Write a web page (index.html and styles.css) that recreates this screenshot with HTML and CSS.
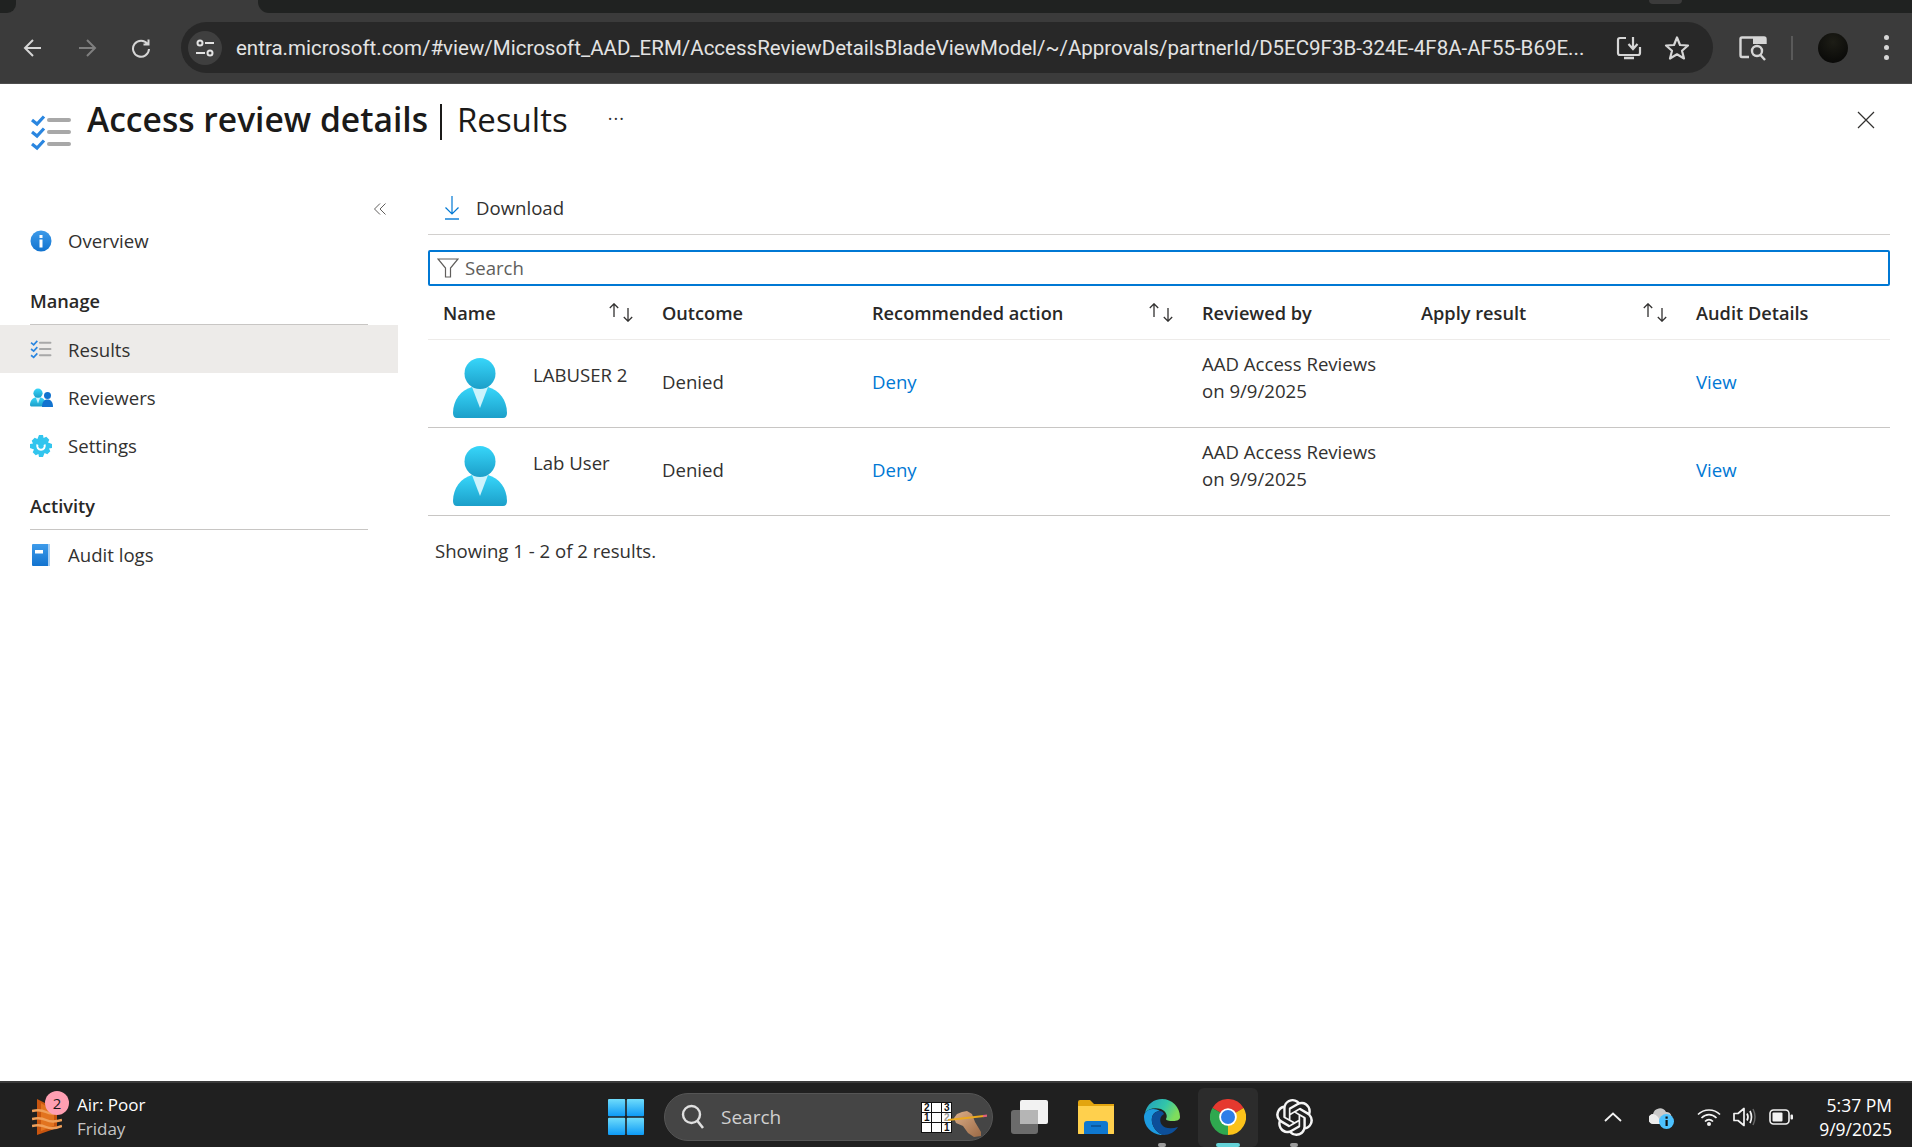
FILE: index.html
```html
<!DOCTYPE html>
<html lang="en">
<head>
  <meta charset="UTF-8" />
  <title>Access review details</title>
  <link rel="stylesheet" href="styles.css">
</head>
<body>
  <svg class="defs" width="0" height="0">
    <defs>
      <linearGradient id="cyan" x1="0" y1="0" x2="0" y2="1">
        <stop offset="0" stop-color="#37d6fa"/>
        <stop offset="1" stop-color="#1c9fc9"/>
      </linearGradient>
      <linearGradient id="blue" x1="0" y1="0" x2="0" y2="1">
        <stop offset="0" stop-color="#3d9bea"/>
        <stop offset="1" stop-color="#1273cf"/>
      </linearGradient>
      <linearGradient id="winblue" x1="0" y1="0" x2="0" y2="1">
        <stop offset="0" stop-color="#6fdcfb"/>
        <stop offset="1" stop-color="#0d9af5"/>
      </linearGradient>
      <linearGradient id="edgetop" x1="0" y1="0" x2="1" y2=".4">
        <stop offset="0" stop-color="#1f9cc4"/>
        <stop offset=".6" stop-color="#33c6a8"/>
        <stop offset="1" stop-color="#7fdc5c"/>
      </linearGradient>
      <linearGradient id="handskin" x1="0" y1="0" x2="1" y2="1">
        <stop offset="0" stop-color="#dcae88"/>
        <stop offset="1" stop-color="#9c6a46"/>
      </linearGradient>
      <symbol id="checklist" viewBox="0 0 42 36">
        <g fill="none" stroke="#2a86e0" stroke-width="3.2">
          <polyline points="2,5 7,9 14,1.5"/>
          <polyline points="2,17 7,21 14,13.5"/>
          <polyline points="2,29 7,33 14,25.5"/>
        </g>
        <g fill="none" stroke="#a8a8a8" stroke-width="4" stroke-linecap="round">
          <line x1="19" y1="5" x2="39" y2="5"/>
          <line x1="19" y1="17" x2="39" y2="17"/>
          <line x1="19" y1="29" x2="39" y2="29"/>
        </g>
      </symbol>
      <symbol id="person" viewBox="0 0 54 60">
        <path fill="url(#cyan)" d="M4 60Q0 60 0 55C0 42 8 32 19 29H35C46 32 54 42 54 55Q54 60 50 60Z"/>
        <path fill="#cdf3fc" d="M19 29H35L27 50Z"/>
        <circle fill="url(#cyan)" cx="27" cy="15.5" r="15.5"/>
      </symbol>
      <symbol id="sort" viewBox="0 0 24 19">
        <g fill="none" stroke="#323130" stroke-width="1.3">
          <path d="M5 14V.8M.8 5 5 .8 9.2 5"/>
          <path d="M19 5V18.2M14.800 14 19 18.200 23.200 14"/>
        </g>
      </symbol>
    </defs>
  </svg>

  <header class="browser">
    <div class="tabstrip">
      <div class="tab-gap-left"></div>
      <div class="tab-active"></div>
      <div class="tab-rest"><span class="tab-stub"></span></div>
    </div>
    <div class="toolbar">
      <svg width="20" height="20" viewBox="0 0 20 20"><path d="M18 10H2.500M10 2 2 10 10 18" fill="none" stroke="#d6d6d6" stroke-width="2"/></svg>
      <svg class="fwd" width="20" height="20" viewBox="0 0 20 20"><path d="M2 10H17.500M10 2 18 10 10 18" fill="none" stroke="#7f7f7f" stroke-width="2"/></svg>
      <svg class="reload" width="20" height="20" viewBox="0 0 20 20"><path d="M16.500 6A8 8 0 1 0 18 11M17.500 1.500V6.500H12.500" fill="none" stroke="#d6d6d6" stroke-width="2"/></svg>
      <div class="omnibox">
        <span class="site-btn">
          <svg width="20" height="20" viewBox="0 0 20 20"><g fill="none" stroke="#e3e3e3" stroke-width="2"><circle cx="5" cy="5" r="2.500"/><path d="M10 5H19M1 15H10"/><circle cx="15" cy="15" r="2.500"/></g></svg>
        </span>
        <span class="url">entra.microsoft.com/#view/Microsoft_AAD_ERM/AccessReviewDetailsBladeViewModel/~/Approvals/partnerId/D5EC9F3B-324E-4F8A-AF55-B69E...</span>
        <svg width="26" height="26" viewBox="0 0 26 26"><path d="M10 3H4Q2 3 2 5V18Q2 20 4 20H22Q24 20 24 18V12" fill="none" stroke="#d6d6d6" stroke-width="2.200"/><path d="M8 23H18" stroke="#d6d6d6" stroke-width="2.500"/><path d="M17 2V13M12.500 9 17 14 21.500 9" fill="none" stroke="#d6d6d6" stroke-width="2.200"/></svg>
        <svg class="star" width="26" height="26" viewBox="0 0 26 26"><path d="M13 2.500 16 10 24 10.500 18 15.800 20 23.500 13 19.300 6 23.500 8 15.800 2 10.500 10 10Z" fill="none" stroke="#d6d6d6" stroke-width="2.200" stroke-linejoin="round"/></svg>
      </div>
      <svg class="reader" width="28" height="26" viewBox="0 0 28 26"><path d="M10 22H3Q1.500 22 1.500 20V4Q1.500 2.500 3 2.500H25Q26.500 2.500 26.500 4V9" fill="none" stroke="#d6d6d6" stroke-width="2.400"/><path d="M14 2H27V9H14Z" fill="#d6d6d6"/><circle cx="18" cy="16" r="5" fill="none" stroke="#d6d6d6" stroke-width="2.400"/><path d="M21.500 20 26 25" stroke="#d6d6d6" stroke-width="2.400"/></svg>
      <span class="tool-sep"></span>
      <span class="avatar"></span>
      <span class="dots"><i></i><i></i><i></i></span>
    </div>
  </header>

  <main class="blade">
    <div class="blade-head">
      <svg width="42" height="36"><use href="#checklist"/></svg>
      <h1 class="blade-title"><b>Access review details</b><span class="title-bar"></span><span class="title-sub">Results</span></h1>
      <span class="blade-more">...</span>
      <svg class="blade-close" width="18" height="18" viewBox="0 0 18 18"><path d="M1 1 17 17M17 1 1 17" stroke="#323130" stroke-width="1.200"/></svg>
    </div>

    <div class="blade-body">
      <nav class="sidebar">
        <div class="collapse">
          <svg width="12" height="12" viewBox="0 0 12 12"><path d="M6 .5.500 6 6 11.500M11.500.5 6 6 11.500 11.500" fill="none" stroke="#605e5c" stroke-width="1"/></svg>
        </div>
        <a class="nav-item">
          <svg width="22" height="22" viewBox="0 0 22 22"><circle cx="11" cy="11" r="10.500" fill="url(#blue)"/><rect x="9.500" y="9.500" width="3" height="8" fill="#fff"/><rect x="9.500" y="5" width="3" height="3" fill="#fff"/></svg>
          <span>Overview</span>
        </a>
        <div class="nav-head">Manage</div>
        <a class="nav-item active">
          <svg width="22" height="19"><use href="#checklist"/></svg>
          <span>Results</span>
        </a>
        <a class="nav-item">
          <svg width="23" height="19" viewBox="0 0 23 19"><use href="#person" x="0" y="0" width="16" height="19"/><circle cx="17.500" cy="7.500" r="3.500" fill="#1273cf"/><path d="M12 19C12 14 14 11.500 17.500 11.500S23 14 23 19Z" fill="#1273cf"/></svg>
          <span>Reviewers</span>
        </a>
        <a class="nav-item">
          <svg width="22" height="22" viewBox="0 0 22 22"><path fill="#32c5ee" d="M9 0H13L13.600 3 16.300 1.700 19.300 4.700 18 7.400 22 9V13L19 13.600 20.300 16.300 17.300 19.300 14.600 18 13 22H9L8.400 19 5.700 20.300 2.700 17.300 4 14.600 0 13V9L3 8.400 1.700 5.700 4.700 2.700 7.400 4Z"/><circle cx="11" cy="11" r="6" fill="#32c5ee"/><path d="M7.500 9.500A3.800 3.800 0 1 0 14.500 9.500" fill="none" stroke="#fff" stroke-width="2"/></svg>
          <span>Settings</span>
        </a>
        <div class="nav-head">Activity</div>
        <a class="nav-item">
          <svg width="22" height="22" viewBox="-2 0 22 22"><rect x="0" y="0" width="18" height="22" rx="1" fill="url(#blue)"/><rect x="16" y="0" width="2" height="22" fill="#a9cff2"/><rect x="3" y="6" width="8" height="3.500" fill="#fff"/></svg>
          <span>Audit logs</span>
        </a>
      </nav>

      <section class="content">
        <div class="commandbar">
          <svg width="16" height="24" viewBox="0 0 16 24"><path d="M8 0V18M1.500 11.500 8 18 14.500 11.500" fill="none" stroke="#0078d4" stroke-width="1.200"/><path d="M1 23H15" stroke="#0078d4" stroke-width="1.400"/></svg>
          <span>Download</span>
        </div>

        <div class="searchbox">
          <svg width="22" height="20" viewBox="0 0 22 20"><path d="M1 1H21L13.500 10V19H8.500V10Z" fill="none" stroke="#605e5c" stroke-width="1.200"/></svg>
          <span>Search</span>
        </div>

        <table class="results">
          <colgroup>
            <col class="c-name"><col class="c-outcome"><col class="c-action"><col class="c-reviewed"><col class="c-apply"><col class="c-audit">
          </colgroup>
          <thead>
            <tr>
              <th class="th-name"><div class="th-sort">Name<svg width="24" height="19"><use href="#sort"/></svg></div></th>
              <th>Outcome</th>
              <th><div class="th-sort">Recommended action<svg width="24" height="19"><use href="#sort"/></svg></div></th>
              <th>Reviewed by</th>
              <th><div class="th-sort">Apply result<svg width="24" height="19"><use href="#sort"/></svg></div></th>
              <th>Audit Details</th>
            </tr>
          </thead>
          <tbody>
            <tr>
              <td class="td-name"><div class="user"><svg width="54" height="60"><use href="#person"/></svg><span>LABUSER 2</span></div></td>
              <td>Denied</td>
              <td><a class="link">Deny</a></td>
              <td class="td-reviewed">AAD Access Reviews<br>on 9/9/2025</td>
              <td></td>
              <td><a class="link">View</a></td>
            </tr>
            <tr>
              <td class="td-name"><div class="user"><svg width="54" height="60"><use href="#person"/></svg><span>Lab User</span></div></td>
              <td>Denied</td>
              <td><a class="link">Deny</a></td>
              <td class="td-reviewed">AAD Access Reviews<br>on 9/9/2025</td>
              <td></td>
              <td><a class="link">View</a></td>
            </tr>
          </tbody>
        </table>

        <p class="count">Showing 1 - 2 of 2 results.</p>
      </section>
    </div>
  </main>

  <footer class="taskbar">
    <div class="weather">
      <div class="weather-icon">
        <svg width="30" height="36" viewBox="0 0 30 36"><path d="M5 0 25 10V29L5 36Z" fill="#c8550f"/><path d="M9 4 22 12V27L9 32Z" fill="#e2731f"/><g fill="none" stroke="#f0a05a" stroke-width="2.500"><path d="M0 12Q8 10 14 13T26 13"/><path d="M0 20Q8 18 14 21T30 21"/><path d="M0 27Q8 25 14 28T30 27"/></g></svg>
        <span class="badge">2</span>
      </div>
      <div class="weather-text">
        <span class="w-main">Air: Poor</span>
        <span class="w-sub">Friday</span>
      </div>
    </div>

    <div class="apps">
      <svg width="36" height="36" viewBox="0 0 36 36"><rect width="17.200" height="17.200" rx="1" fill="url(#winblue)"/><rect x="18.800" width="17.200" height="17.200" rx="1" fill="url(#winblue)"/><rect y="18.800" width="17.200" height="17.200" rx="1" fill="url(#winblue)"/><rect x="18.800" y="18.800" width="17.200" height="17.200" rx="1" fill="url(#winblue)"/></svg>
      <div class="tb-search">
        <svg width="24" height="26" viewBox="0 0 24 26"><circle cx="10.500" cy="10.500" r="8.500" fill="none" stroke="#e0e0e0" stroke-width="2.400"/><path d="M16.500 17 22 24" stroke="#e0e0e0" stroke-width="2.600"/></svg>
        <span class="tb-search-label">Search</span>
        <div class="sudoku">
          <span>2</span><span></span><span>3</span>
          <span>1</span><span></span><span class="faint">2</span>
          <span></span><span></span><span>1</span>
          <svg class="hand" width="39" height="26" viewBox="0 0 39 26"><path d="M6 7 9 3 14 1 19 0 24 3 27 11 33 21 33 25 26 26 20 22 15 15 8 12Z" fill="url(#handskin)"/><path d="M0 9 36 5" stroke="#eaa81e" stroke-width="2.200"/><path d="M35 5.100 39 4.600" stroke="#e0607a" stroke-width="2.200"/></svg>
        </div>
      </div>
      <svg class="app-taskview" width="37" height="34" viewBox="0 0 37 34"><rect x="0" y="10" width="27" height="24" rx="3" fill="#6b6b6b"/><rect x="9" y="0" width="28" height="24" rx="2" fill="#f2f2f2"/><rect x="9" y="10" width="18" height="14" fill="#b5b5b5"/></svg>
      <svg class="app-folder" width="36" height="34" viewBox="0 0 36 34"><path d="M0 2Q0 0 2 0H12L16 4H36V34H0Z" fill="#e3a50f"/><path d="M0 6H36V33Q36 34 35 34H1Q0 34 0 33Z" fill="#ffd04d"/><path d="M6 34V24Q6 21 9 21H27Q30 21 30 24V34Z" fill="#0f78d0"/><path d="M13 26H23" stroke="#0b4f8f" stroke-width="1.500"/></svg>
      <div class="app-tile">
        <svg width="36" height="36" viewBox="0 0 36 36"><path d="M1 14C3 5 10 0 18 0 28 0 36 8 36 18 36 21 33 22 29 22 25 22 22 21.500 22 20 24 17 22 12 17 10 10 8 4 10 1 14Z" fill="url(#edgetop)"/><path d="M1 14C4 9 12 9 16 12 10 12 7 17 8 23 9 29 14 35 20 36 9 37 0 28 0 18 0 16 .5 15 1 14Z" fill="#1d9be0"/><path d="M16 12C10 12 7 17 8 23 9 29 14 35 20 36 25 36 31 33 34 28 28 30 21 30 18 26 15 22 16 17 20 15 19 13 18 12 16 12Z" fill="#0c4f9a"/></svg>
        <i class="dot"></i>
      </div>
      <div class="app-tile active">
        <svg width="36" height="36" viewBox="0 0 36 36"><path d="M18 18 2.400 9A18 18 0 0 1 33.600 9Z" fill="#e5392f"/><path d="M18 18 33.600 9A18 18 0 0 1 18 36Z" fill="#fbc21a"/><path d="M18 18 18 36A18 18 0 0 1 2.400 9Z" fill="#2fa84f"/><circle cx="18" cy="18" r="8.800" fill="#fff"/><circle cx="18" cy="18" r="7" fill="#2f7ee8"/></svg>
        <i class="dot wide"></i>
      </div>
      <div class="app-tile">
        <svg width="37" height="37" viewBox="0 0 24 24"><path fill="#f4f4f4" d="M22.2819 9.8211a5.9847 5.9847 0 0 0-.5157-4.9108 6.0462 6.0462 0 0 0-6.5098-2.9A6.0651 6.0651 0 0 0 4.9807 4.1818a5.9847 5.9847 0 0 0-3.9977 2.9 6.0462 6.0462 0 0 0 .7427 7.0966 5.98 5.98 0 0 0 .511 4.9107 6.051 6.051 0 0 0 6.5146 2.9001A5.9847 5.9847 0 0 0 13.2599 24a6.0557 6.0557 0 0 0 5.7718-4.2058 5.9894 5.9894 0 0 0 3.9977-2.9001 6.0557 6.0557 0 0 0-.7475-7.0729zm-9.022 12.6081a4.4755 4.4755 0 0 1-2.8764-1.0408l.1419-.0804 4.7783-2.7582a.7948.7948 0 0 0 .3927-.6813v-6.7369l2.02 1.1686a.071.071 0 0 1 .038.052v5.5826a4.504 4.504 0 0 1-4.4945 4.4944zm-9.6607-4.1254a4.4708 4.4708 0 0 1-.5346-3.0137l.142.0852 4.783 2.7582a.7712.7712 0 0 0 .7806 0l5.8428-3.3685v2.3324a.0804.0804 0 0 1-.0332.0615L9.74 19.9502a4.4992 4.4992 0 0 1-6.1408-1.6464zM2.3408 7.8956a4.485 4.485 0 0 1 2.3655-1.9728V11.6a.7664.7664 0 0 0 .3879.6765l5.8144 3.3543-2.0201 1.1685a.0757.0757 0 0 1-.071 0l-4.8303-2.7865A4.504 4.504 0 0 1 2.3408 7.872zm16.5963 3.8558L13.1038 8.364 15.1192 7.2a.0757.0757 0 0 1 .071 0l4.8303 2.7913a4.4944 4.4944 0 0 1-.6765 8.1042v-5.6772a.79.79 0 0 0-.407-.667zm2.0107-3.0231l-.142-.0852-4.7735-2.7818a.7759.7759 0 0 0-.7854 0L9.409 9.2297V6.8974a.0662.0662 0 0 1 .0284-.0615l4.8303-2.7866a4.4992 4.4992 0 0 1 6.6802 4.66zM8.3065 12.863l-2.02-1.1638a.0804.0804 0 0 1-.038-.0567V6.0742a4.4992 4.4992 0 0 1 7.3757-3.4537l-.142.0805L8.704 5.459a.7948.7948 0 0 0-.3927.6813zm1.0976-2.3654l2.602-1.4998 2.6069 1.4998v2.9994l-2.5974 1.4997-2.6067-1.4997Z"/></svg>
        <i class="dot"></i>
      </div>
    </div>

    <div class="tray">
      <svg width="18" height="10" viewBox="0 0 18 10"><path d="M1 9 9 1.500 17 9" fill="none" stroke="#f2f2f2" stroke-width="1.800"/></svg>
      <svg width="25" height="24" viewBox="0 0 25 24"><path d="M5 19A5 5 0 0 1 4 9 7 7 0 0 1 17 7 5 5 0 0 1 18 17Z" fill="#c9c9c9"/><path d="M5 19A5 5 0 0 1 4 9Q10 10 12 19Z" fill="#ececec"/><circle cx="17.500" cy="16.500" r="7.500" fill="#4cc2ff"/><rect x="16.500" y="15" width="2.200" height="6" fill="#111"/><rect x="16.500" y="11.500" width="2.200" height="2.200" fill="#111"/></svg>
      <svg width="24" height="18" viewBox="0 0 24 18"><g fill="none" stroke="#f2f2f2" stroke-width="1.700"><path d="M1 6.500C7 .5 17 .5 23 6.500"/><path d="M4.500 10C9 5.500 15 5.500 19.500 10"/><path d="M8 13.500C10.500 11 13.500 11 16 13.500"/></g><circle cx="12" cy="16" r="2" fill="#f2f2f2"/></svg>
      <svg width="24" height="22" viewBox="0 0 24 22"><path d="M1 7.500H5L11 2.500V19.500L5 14.500H1Z" fill="none" stroke="#f2f2f2" stroke-width="1.700" stroke-linejoin="round"/><path d="M14 7.500Q16 11 14 14.500M17 5Q20 11 17 17" fill="none" stroke="#f2f2f2" stroke-width="1.700"/><path d="M20 3Q24 11 20 19" fill="none" stroke="#666" stroke-width="1.500"/></svg>
      <svg width="24" height="16" viewBox="0 0 24 16"><rect x="1" y="1" width="19" height="14" rx="3.500" fill="none" stroke="#f2f2f2" stroke-width="1.600"/><rect x="3.500" y="3.500" width="10" height="9" rx="1" fill="#f2f2f2"/><rect x="21.500" y="5.500" width="2.500" height="5" rx="1" fill="#f2f2f2"/></svg>
      <div class="clock"><span>5:37 PM</span><span>9/9/2025</span></div>
    </div>
  </footer>
</body>
</html>
```

FILE: styles.css
```css
* {
  box-sizing: border-box;
}

html,
body {
  margin: 0;
  height: 100%;
}

body {
  display: flex;
  flex-direction: column;
  height: 1147px;
  overflow: hidden;
  background: #fff;
  color: #323130;
  font-family: "Open Sans", "Liberation Sans", sans-serif;
  font-size: 18.6px;
}

.defs {
  position: absolute;
}

svg {
  display: block;
  flex: none;
}

/* browser */
.tabstrip {
  display: flex;
  height: 13px;
  background: #3b3b3b;
}

.tab-gap-left {
  width: 16px;
  background: #202221;
  border-bottom-right-radius: 9px;
}

.tab-active {
  width: 242px;
}

.tab-rest {
  flex: 1;
  padding-left: 1391px;
  background: #202221;
  border-bottom-left-radius: 11px;
}

.tab-stub {
  display: block;
  width: 33px;
  height: 4px;
  background: #3b3b3b;
  border-radius: 0 0 8px 8px;
}

.toolbar {
  display: flex;
  align-items: center;
  height: 71px;
  padding: 0 0 1px 23px;
  background: #3b3b3b;
  border-bottom: 1px solid #4d4d4d;
}

.fwd {
  margin-left: 34px;
}

.reload {
  margin-left: 34px;
}

.omnibox {
  display: flex;
  align-items: center;
  width: 1532px;
  height: 51px;
  margin-left: 30px;
  padding-left: 7px;
  background: #282828;
  border-radius: 26px;
}

.site-btn {
  display: flex;
  align-items: center;
  justify-content: center;
  width: 34px;
  height: 34px;
  background: #3f3f3f;
  border-radius: 50%;
}

.url {
  width: 1380px;
  margin-left: 14px;
  color: #e3e3e3;
  font-family: "Roboto", sans-serif;
  font-size: 20.5px;
  white-space: nowrap;
}

.star {
  margin-left: 22px;
}

.reader {
  margin-left: 26px;
}

.tool-sep {
  width: 2px;
  height: 24px;
  margin-left: 24px;
  background: #5a5a5a;
}

.avatar {
  width: 30px;
  height: 30px;
  margin-left: 25px;
  background: radial-gradient(circle at 50% 30%, #1d1d16, #050505);
  border-radius: 50%;
}

.dots {
  display: flex;
  flex-direction: column;
  gap: 5px;
  margin-left: 36px;
}

.dots i {
  width: 5px;
  height: 5px;
  background: #d6d6d6;
  border-radius: 50%;
}

/* blade */
.blade {
  flex: 1;
  display: flex;
  flex-direction: column;
}

.blade-head {
  display: flex;
  align-items: flex-start;
  height: 100px;
  padding: 31px 37px 0 30px;
}

.blade-title {
  display: flex;
  align-items: center;
  height: 46px;
  margin: -19px 0 0 15px;
  color: #1b1a19;
  font-size: 33px;
  font-weight: 400;
  white-space: nowrap;
}

.blade-title b {
  font-size: 33.6px;
  font-weight: 600;
}

.title-bar {
  width: 2px;
  height: 36px;
  margin: 6px 15px 0 12px;
  background: #1b1a19;
}

.blade-more {
  margin: -14px 0 0 40px;
  font-size: 18px;
  letter-spacing: 1px;
}

.blade-close {
  margin: -4px 0 0 auto;
}

.blade-body {
  flex: 1;
  display: flex;
}

.sidebar {
  width: 398px;
  flex: none;
}

.collapse {
  display: flex;
  justify-content: flex-end;
  height: 32px;
  padding: 19px 12px 0 0;
}

.nav-item {
  display: grid;
  grid-template-columns: 38px 1fr;
  align-items: center;
  height: 48px;
  padding: 1px 0 0 30px;
}

.nav-item.active {
  background: #edebe9;
}

.nav-head {
  display: flex;
  align-items: flex-end;
  height: 61px;
  margin: 0 30px;
  padding-bottom: 11px;
  border-bottom: 1px solid #c8c6c4;
  color: #292827;
  font-size: 18.2px;
  font-weight: 600;
}

.content {
  flex: 1;
  margin: 0 22px 0 30px;
}

.commandbar {
  display: flex;
  align-items: center;
  gap: 16px;
  height: 51px;
  padding: 0 0 3px 16px;
  border-bottom: 1px solid #d2d0ce;
}

.searchbox {
  display: flex;
  align-items: center;
  gap: 6px;
  height: 36px;
  margin-top: 15px;
  padding: 0 0 1px 7px;
  border: 2px solid #0078d4;
  border-radius: 2px;
  color: #605e5c;
}

.results {
  width: 100%;
  table-layout: fixed;
  border-collapse: separate;
  border-spacing: 0;
}

.c-name { width: 222px; }
.c-outcome { width: 210px; }
.c-action { width: 330px; }
.c-reviewed { width: 219px; }
.c-apply { width: 275px; }

.results th {
  height: 54px;
  padding: 0 12px;
  border-bottom: 1px solid #edebe9;
  color: #292827;
  font-size: 18.2px;
  font-weight: 600;
  text-align: left;
}

.results th.th-name {
  padding-left: 15px;
}

.th-sort {
  display: flex;
  align-items: center;
  justify-content: space-between;
  padding-right: 5px;
}

.results td {
  height: 88px;
  padding: 0 12px 4px;
  border-bottom: 1px solid #c8c6c4;
  line-height: 27px;
  vertical-align: middle;
}

.results td.td-name {
  padding: 18px 0 0 25px;
  vertical-align: top;
}

.results td.td-reviewed {
  padding-bottom: 14px;
}

.user {
  display: flex;
  align-items: flex-start;
  gap: 26px;
}

.user span {
  margin-top: 3px;
}

.link {
  color: #0078d4;
}

.count {
  margin: 22px 0 0 7px;
  line-height: 26px;
}

/* taskbar */
.taskbar {
  display: flex;
  align-items: center;
  height: 66px;
  padding-top: 4px;
  background: #202020;
  border-top: 2px solid #3b3b3b;
  color: #fff;
  font-size: 17px;
}

.weather {
  display: flex;
  align-items: center;
  gap: 15px;
  width: 608px;
  padding-left: 32px;
}

.weather-icon {
  position: relative;
}

.badge {
  position: absolute;
  top: -8px;
  left: 13px;
  width: 24px;
  height: 24px;
  background: #ff9fb2;
  border-radius: 50%;
  color: #1a1a1a;
  font-size: 15px;
  line-height: 24px;
  text-align: center;
}

.weather-text {
  display: flex;
  flex-direction: column;
  line-height: 24px;
}

.w-sub {
  color: #c4c4c4;
}

.apps {
  display: flex;
  align-items: center;
}

.tb-search {
  display: flex;
  align-items: center;
  width: 329px;
  height: 48px;
  margin-left: 20px;
  padding-left: 16px;
  background: #454545;
  border: 1px solid #555;
  border-radius: 24px;
}

.tb-search-label {
  margin-left: 16px;
  color: #d0d0d0;
  font-size: 19px;
}

.sudoku {
  position: relative;
  display: grid;
  grid-template-columns: repeat(3, 9px);
  grid-auto-rows: 9px;
  gap: 1px;
  margin-left: 140px;
  background: #111;
  border: 1px solid #111;
  color: #111;
  font-family: "Liberation Sans", sans-serif;
  font-size: 10px;
  font-weight: 700;
  line-height: 9px;
  text-align: center;
}

.sudoku span {
  background: #fff;
}

.sudoku .faint {
  color: #999;
}

.hand {
  position: absolute;
  top: 8px;
  left: 26px;
}

.app-taskview {
  margin-left: 18px;
}

.app-folder {
  margin-left: 30px;
}

.app-tile {
  position: relative;
  display: flex;
  align-items: center;
  justify-content: center;
  width: 60px;
  height: 59px;
}

.app-folder + .app-tile {
  margin-left: 18px;
}

.app-tile + .app-tile {
  margin-left: 6px;
}

.app-tile.active {
  background: #2c2c2c;
  border-radius: 6px;
}

.dot {
  position: absolute;
  bottom: 0;
  left: 50%;
  width: 8px;
  height: 4px;
  margin-left: -4px;
  background: #9a9a9a;
  border-radius: 2px;
}

.dot.wide {
  width: 24px;
  margin-left: -12px;
  background: #63d1d6;
}

.tray {
  display: flex;
  align-items: center;
  gap: 12px;
  margin-left: auto;
}

.tray > svg:first-child {
  margin-right: 15px;
}

.tray > svg:nth-child(2) {
  margin-right: 11px;
}

.clock {
  display: flex;
  flex-direction: column;
  align-items: flex-end;
  margin: 0 20px 0 14px;
  font-size: 17.5px;
  line-height: 24px;
}
```
